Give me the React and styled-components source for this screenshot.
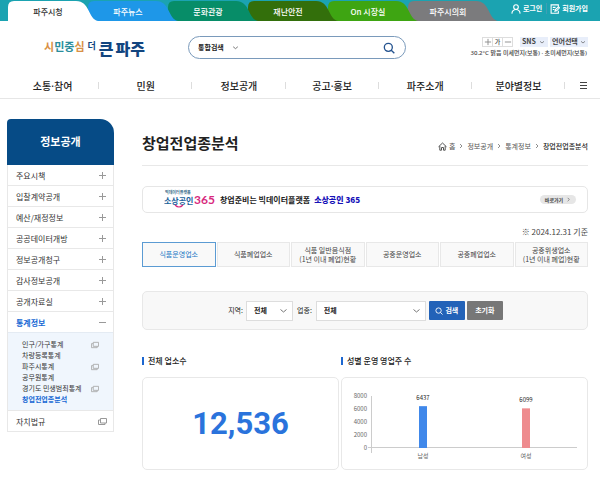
import React, { useState } from 'react';
import styled, { createGlobalStyle } from 'styled-components';

const GlobalStyle = createGlobalStyle`
  * {
    box-sizing: border-box;
  }

  body {
    margin: 0;
    background: #fff;
    color: #222;
    font-family: 'Noto Sans CJK KR', 'Noto Sans', sans-serif;
    font-size: 7px;
    line-height: 11px;
  }

  a {
    color: inherit;
    text-decoration: none;
  }

  ul,
  h1,
  h2,
  p {
    margin: 0;
    padding: 0;
    list-style: none;
  }

  button,
  input,
  select {
    margin: 0;
    padding: 0;
    border: 0;
    background: none;
    color: inherit;
    font: inherit;
  }

  svg {
    display: block;
    flex: none;
  }
`;

const TopBar = styled.div`
  display: flex;
  justify-content: space-between;
  height: 21px;
  padding: 1px 12px 0 8px;
  background: #1ba3b1;
`;

const SiteTabs = styled.nav`
  display: flex;
  isolation: isolate;
`;

const SiteTab = styled.a`
  position: relative;
  z-index: ${(props) => props.$order};
  width: 90px;
  margin-right: -10px;
  padding-right: 10px;
  background: ${(props) => props.$bg};
  color: ${(props) => props.$color || '#fff'};
  clip-path: path('M0 20V6Q0 0 6 0H68C82 0 80 18 90 20Z');
  font-size: 8px;
  font-weight: 500;
  line-height: 21px;
  text-align: center;
`;

const Account = styled.div`
  display: flex;
  align-items: center;
  height: 15px;
  color: #fff;
  font-weight: 700;

  a {
    display: flex;
    align-items: center;
    gap: 2px;
  }

  a + a {
    margin-left: 4px;
    padding-left: 3px;
    border-left: 1px solid #3e9fb5;
  }
`;

const Header = styled.header`
  display: flex;
  align-items: center;
  height: 53px;
  padding: 0 12px 0 44px;
`;

const Logo = styled.a`
  display: flex;
  align-items: center;
  width: 144px;
  color: #12457f;
  font-weight: 900;
  white-space: nowrap;
`;

const LogoSmall = styled.span`
  margin-right: 3px;
  padding-bottom: 4px;
  color: ${(props) => props.$color || '#2a8d9c'};
  font-size: ${(props) => props.$size || 11}px;
  font-weight: 700;
  line-height: 14px;

  em {
    color: #d99045;
    font-style: normal;
  }
`;

const LogoBig = styled.span`
  display: flex;
  gap: 2px;
  font-size: 16px;
  line-height: 24px;
`;

const SearchBox = styled.form`
  display: flex;
  align-items: center;
  flex: 0 1 218px;
  height: 23px;
  padding: 0 10px 0 9px;
  border: 1px solid #7a9abb;
  border-radius: 12px;

  input {
    flex: 1;
    min-width: 0;
    outline: 0;
  }

  button {
    color: #24538f;
  }
`;

const SelectWrap = styled.span`
  display: flex;
  align-items: center;
  width: ${(props) => props.$width}px;
  height: ${(props) => props.$height || 10}px;
  padding: ${(props) => props.$padding || '0'};
  border: ${(props) => (props.$boxed ? '1px solid #ddd' : '0')};
  background: ${(props) => props.$bg || 'transparent'};
  font-weight: ${(props) => props.$weight || 700};

  select {
    flex: 1;
    min-width: 0;
    appearance: none;
    outline: 0;
  }

  svg {
    color: ${(props) => (props.$boxed ? '#777' : '#555')};
  }
`;

const Tools = styled.div`
  display: flex;
  flex-direction: column;
  align-items: flex-end;
  gap: 1px;
  margin-left: auto;
  color: #444;
`;

const ToolRow = styled.div`
  display: flex;
  gap: 2px;
`;

const FontSize = styled.div`
  display: flex;
  margin-right: 5px;
  border: 1px solid #ddd;

  button {
    display: grid;
    place-items: center;
    width: 9px;
    height: 8px;
    font-size: 6px;
    font-weight: 500;
    line-height: 8px;
  }

  button + button {
    width: 10px;
    border-left: 1px solid #ddd;
  }

  svg {
    color: #888;
  }
`;

const Weather = styled.p`
  padding-right: 1px;
  font-family: 'Noto Sans', 'Noto Sans CJK KR', sans-serif;
  font-size: 6px;
  font-weight: 500;
  white-space: nowrap;
`;

const MainNav = styled.nav`
  display: flex;
  align-items: center;
  height: 25px;
  padding: 0 0 1px 6px;
  border-bottom: 1px solid #e6e6e6;

  a {
    flex: 1;
    background: linear-gradient(#ddd, #ddd) right center / 1px 7px no-repeat;
    font-family: 'Noto Sans', 'Noto Sans CJK KR', sans-serif;
    font-size: 10px;
    font-weight: 500;
    line-height: 22px;
    text-align: center;
  }

  button {
    display: grid;
    place-items: center;
    width: 35px;
    height: 22px;
    padding-left: 2px;
    color: #444;
  }
`;

const Page = styled.div`
  display: flex;
  align-items: flex-start;
  gap: 28px;
  padding: 20px 12px 9px 7px;
`;

const Side = styled.aside`
  flex: 0 0 107px;
`;

const SideTitle = styled.h2`
  height: 46px;
  border-radius: 4px 14px 0 0;
  background: #064b86;
  color: #fff;
  font-size: 11px;
  font-weight: 700;
  line-height: 45px;
  text-align: center;
`;

const SideList = styled.ul`
  border: 1px solid #e8e8e8;
  border-top: 0;
`;

const SideItem = styled.li`
  & + & {
    border-top: 1px solid #e8e8e8;
  }
`;

const SideLink = styled.a`
  display: flex;
  align-items: center;
  justify-content: space-between;
  height: 20px;
  padding: 1px 6px 0 8px;
  color: ${(props) => (props.$active ? '#1668d4' : '#333')};
  font-size: 8px;
  font-weight: ${(props) => (props.$active ? 700 : 400)};

  svg {
    color: #999;
  }
`;

const SubList = styled.ul`
  padding: 6px 14px 5px;
  border-top: 1px solid #e4ebf3;
  background: #f0f6fd;
`;

const SubLink = styled.a`
  display: flex;
  align-items: center;
  justify-content: space-between;
  color: ${(props) => (props.$active ? '#1668d4' : '#333')};
  font-weight: ${(props) => (props.$active ? 700 : 400)};
  white-space: nowrap;

  svg {
    color: #aaa;
  }
`;

const Main = styled.main`
  flex: 1;
  min-width: 0;
`;

const TitleRow = styled.div`
  display: flex;
  align-items: center;
  justify-content: space-between;
  height: 47px;
  border-bottom: 1px solid #e8e8e8;

  h1 {
    font-size: 15px;
    font-weight: 700;
    line-height: 47px;
  }
`;

const Crumbs = styled.nav`
  display: flex;
  align-items: center;
  gap: 3px;
  padding-top: 8px;
  color: #555;

  a:first-child {
    display: flex;
    align-items: center;
    gap: 2px;
  }

  strong {
    color: #222;
    font-weight: 500;
  }
`;

const Banner = styled.a`
  display: flex;
  align-items: center;
  height: 27px;
  margin-top: 20px;
  padding: 0 11px 0 21px;
  border: 1px solid #e6e6e6;
  border-radius: 5px;
  font-size: 8px;
  font-weight: 700;

  strong {
    margin-left: 4px;
    color: #1712b8;
  }
`;

const BannerText = styled.span`
  margin-left: 4px;
`;

const BannerMore = styled.span`
  display: flex;
  align-items: center;
  justify-content: center;
  gap: 3px;
  width: 36px;
  height: 9px;
  margin-left: auto;
  border-radius: 5px;
  background: #e6e6e6;
  color: #444;
  font-size: 5px;
  line-height: 9px;
`;

const BaseDate = styled.p`
  margin-top: 13px;
  color: #444;
  font-size: 8px;
  line-height: 12px;
  text-align: right;
`;

const TabGrid = styled.div`
  display: grid;
  grid-template-columns: repeat(6, 1fr);
  gap: 1px;
  margin-top: 4px;
`;

const TabButton = styled.button`
  height: 25px;
  border: 1px solid ${(props) => (props.$active ? '#5b9bd3' : '#e8e8e8')};
  background: #f9f9f9;
  color: ${(props) => (props.$active ? '#2277c4' : '#444')};
  line-height: 9px;
  white-space: pre-line;
`;

const Filter = styled.form`
  display: flex;
  align-items: center;
  justify-content: center;
  gap: 3px;
  height: 39px;
  margin-top: 24px;
  padding-left: 1px;
  border: 1px solid #e8e8e8;
  border-radius: 5px;
  background: #f8f8f8;

  label + span + label {
    margin: 0 1px;
  }
`;

const FilterButton = styled.button`
  display: flex;
  align-items: center;
  justify-content: center;
  gap: 2px;
  width: 36px;
  height: 19px;
  margin-right: ${(props) => (props.$primary ? '-1px' : '0')};
  border-radius: 1px;
  background: ${(props) => (props.$primary ? '#2262b8' : '#777')};
  color: #fff;
  font-weight: 700;
`;

const Panels = styled.div`
  display: grid;
  grid-template-columns: 197fr 247fr;
  gap: 2px;
  margin-top: 25px;
`;

const PanelTitle = styled.h2`
  display: flex;
  align-items: center;
  gap: 4px;
  font-size: 8px;
  font-weight: 500;
  line-height: 12px;

  &::before {
    content: '';
    width: 2px;
    height: 8px;
    background: #1d67d0;
  }
`;

const Card = styled.div`
  display: grid;
  place-items: center;
  height: 93px;
  margin-top: 10px;
  border: 1px solid #e8e8e8;
  border-radius: 5px;
`;

const Total = styled.strong`
  color: #2a73dc;
  font-family: Roboto, sans-serif;
  font-size: 31px;
  font-weight: 700;
  line-height: 36px;
`;

const Chart = styled.svg`
  width: 100%;
  height: 91px;
  font-size: 6px;
`;

const siteTabs = [
  { name: '파주시청', bg: '#fff', color: '#333' },
  { name: '파주뉴스', bg: '#1e97e8' },
  { name: '문화관광', bg: '#078d68' },
  { name: '재난안전', bg: '#336f0b' },
  { name: 'On 시장실', bg: '#3ea512' },
  { name: '파주시의회', bg: '#7b7b7d' },
];

const mainMenu = ['소통·참여', '민원', '정보공개', '공고·홍보', '파주소개', '분야별정보'];

const sideMenu = [
  { name: '주요시책', icon: 'plus' },
  { name: '입찰계약공개', icon: 'plus' },
  { name: '예산/재정정보', icon: 'plus' },
  { name: '공공데이터개방', icon: 'plus' },
  { name: '정보공개청구', icon: 'plus' },
  { name: '감사정보공개', icon: 'plus' },
  { name: '공개자료실', icon: 'plus' },
  {
    name: '통계정보',
    icon: 'minus',
    children: [
      { name: '인구/가구통계', external: true },
      { name: '차량등록통계' },
      { name: '파주시통계', external: true },
      { name: '공무원통계' },
      { name: '경기도 민생범죄통계', external: true },
      { name: '창업전업종분석', active: true },
    ],
  },
  { name: '자치법규', icon: 'window' },
];

const tabs = [
  '식품운영업소',
  '식품폐업업소',
  '식품 일반음식점\n(1년 이내 폐업)현황',
  '공중운영업소',
  '공중폐업업소',
  '공중위생업소\n(1년 이내 폐업)현황',
];

const owners = [
  { label: '남성', value: 6437, x: 81, color: '#4088ea' },
  { label: '여성', value: 6099, x: 184, color: '#ee8b8e' },
];

const icons = {
  plus: <path d='M4.5 1v7M1 4.5h7' />,
  minus: <path d='M1 4.5h7' />,
  window: <path d='M2.500 1.500h6v4.500h-6zM2.500 3H.5v4.500H7V6' />,
  down: <path d='M1.500 3.500l3 2.500l3-2.500' />,
  right: <path d='M3 1.500l3 3L3 7.500' />,
  search: <path d='M4 1a3 3 0 1 0 0 6a3 3 0 0 0 0-6M6.2 6.2l2.3 2.3' />,
  user: <path d='M4.5.7a2 2 0 0 0 0 4.2a2 2 0 0 0 0-4.2M.8 8.7C1 6.3 2.3 5 4.5 5s3.500 1.300 3.700 3.700' />,
  join: <path d='M7.500 2.500V.8H1v7.500h6.500V6M2.500 3h2.500M2.500 5h1.500M4.500 6.500l.4-1.500L7.700 2.500l.9.900-2.700 2.700z' />,
  home: <path d='M.5 4.800L4.500 1l4 3.800M1.800 4v4.200h1.700V5.500h2v2.700h1.700V4' />,
  menu: <path d='M1 1.500h7M1 4.500h7M1 7.500h7' />,
};

const Icon = ({ name, size = 9, stroke = 1 }) => (
  <svg
    width={size}
    height={size}
    viewBox='0 0 9 9'
    fill='none'
    stroke='currentColor'
    strokeWidth={stroke}
    aria-hidden='true'
  >
    {icons[name]}
  </svg>
);

const SobizLogo = () => (
  <svg width='52' height='21' viewBox='0 0 52 21' role='img' aria-label='소상공인 365'>
    <text x='1' y='5' fontSize='4' fill='#3a6d8c'>
      빅데이터플랫폼
    </text>
    <text x='0' y='15' fontSize='8' fontWeight='700' fill='#17609a'>
      소상공인
    </text>
    <text x='30' y='15' fontSize='12' fontWeight='700' fontFamily='Lato' fill='#d8297e'>
      365
    </text>
    <path d='M11 16q4 4 8 0' fill='none' stroke='#d8297e' strokeWidth='1.200' />
  </svg>
);

const OwnerChart = () => {
  const base = 70;
  const scale = 52 / 8000;

  return (
    <Chart viewBox='0 0 245 91' role='img' aria-label='성별 운영 영업주 수'>
      {[8000, 6000, 4000, 2000, 0].map((tick) => (
        <text key={tick} x='25' y={base + 2 - tick * scale} textAnchor='end' fill='#666'>
          {tick}
        </text>
      ))}
      <path d='M29.500 18v57M26 69.500h209' stroke='#ccc' fill='none' />
      {owners.map(({ label, value, x, color }) => (
        <g key={label} textAnchor='middle'>
          <rect x={x - 4} y={base - value * scale} width='8' height={value * scale} fill={color} />
          <text x={x} y={base - value * scale - 6} fill='#222'>
            {value}
          </text>
          <text x={x} y='80' fill='#666'>
            {label}
          </text>
        </g>
      ))}
    </Chart>
  );
};

const App = () => {
  const [activeTab, setActiveTab] = useState(0);

  const handleSubmit = (e) => {
    e.preventDefault();
  };

  return (
    <>
      <GlobalStyle />
      <TopBar>
        <SiteTabs>
          {siteTabs.map(({ name, bg, color }, i) => (
            <SiteTab key={name} href='#' $bg={bg} $color={color} $order={siteTabs.length - i}>
              {name}
            </SiteTab>
          ))}
        </SiteTabs>
        <Account>
          <a href='#'>
            <Icon name='user' size={10} />
            로그인
          </a>
          <a href='#'>
            <Icon name='join' size={10} />
            회원가입
          </a>
        </Account>
      </TopBar>

      <Header>
        <Logo href='#'>
          <LogoSmall>
            <em>시</em>민중<em>심</em>
          </LogoSmall>
          <LogoSmall $color='#12457f' $size={9}>
            더
          </LogoSmall>
          <LogoBig>
            <span>큰</span> <span>파주</span>
          </LogoBig>
        </Logo>
        <SearchBox onSubmit={handleSubmit}>
          <SelectWrap $width={41}>
            <select aria-label='검색 범위'>
              <option>통합검색</option>
            </select>
            <Icon name='down' size={7} />
          </SelectWrap>
          <input type='text' aria-label='검색어' />
          <button type='submit' aria-label='검색'>
            <Icon name='search' size={12} />
          </button>
        </SearchBox>
        <Tools>
          <ToolRow>
            <FontSize>
              <button type='button' aria-label='글자 크게'>
                <Icon name='plus' size={8} />
              </button>
              <button type='button'>가</button>
              <button type='button' aria-label='글자 작게'>
                <Icon name='minus' size={8} />
              </button>
            </FontSize>
            <SelectWrap $width={28} $bg='#e8eefa' $padding='0 3px 0 2px'>
              <select aria-label='SNS'>
                <option>SNS</option>
              </select>
              <Icon name='down' size={6} />
            </SelectWrap>
            <SelectWrap $width={38} $bg='#e8eefa' $padding='0 2px'>
              <select aria-label='언어'>
                <option>언어선택</option>
              </select>
              <Icon name='down' size={6} />
            </SelectWrap>
          </ToolRow>
          <Weather>30.2°C 맑음 미세먼지(보통) · 초미세먼지(보통)</Weather>
        </Tools>
      </Header>

      <MainNav>
        {mainMenu.map((name) => (
          <a key={name} href='#'>
            {name}
          </a>
        ))}
        <button type='button' aria-label='전체메뉴'>
          <Icon name='menu' />
        </button>
      </MainNav>

      <Page>
        <Side>
          <SideTitle>정보공개</SideTitle>
          <SideList>
            {sideMenu.map(({ name, icon, children }) => (
              <SideItem key={name}>
                <SideLink href='#' $active={!!children}>
                  {name}
                  <Icon name={icon} />
                </SideLink>
                {children && (
                  <SubList>
                    {children.map((sub) => (
                      <li key={sub.name}>
                        <SubLink href='#' $active={sub.active}>
                          {sub.name}
                          {sub.external && <Icon name='window' size={8} />}
                        </SubLink>
                      </li>
                    ))}
                  </SubList>
                )}
              </SideItem>
            ))}
          </SideList>
        </Side>

        <Main>
          <TitleRow>
            <h1>창업전업종분석</h1>
            <Crumbs>
              <a href='#'>
                <Icon name='home' />홈
              </a>
              <Icon name='right' size={6} />
              <a href='#'>정보공개</a>
              <Icon name='right' size={6} />
              <a href='#'>통계정보</a>
              <Icon name='right' size={6} />
              <strong>창업전업종분석</strong>
            </Crumbs>
          </TitleRow>

          <Banner href='#'>
            <SobizLogo />
            <BannerText>
              창업준비는 빅데이터플랫폼<strong>소상공인 365</strong>
            </BannerText>
            <BannerMore>
              바로가기
              <Icon name='right' size={5} />
            </BannerMore>
          </Banner>

          <BaseDate>※ 2024.12.31 기준</BaseDate>

          <TabGrid>
            {tabs.map((name, i) => (
              <TabButton
                key={name}
                type='button'
                $active={i === activeTab}
                onClick={() => setActiveTab(i)}
              >
                {name}
              </TabButton>
            ))}
          </TabGrid>

          <Filter onSubmit={handleSubmit}>
            <label htmlFor='region'>지역:</label>
            <SelectWrap $width={47} $height={20} $padding='0 4px 0 7px' $bg='#fff' $boxed>
              <select id='region'>
                <option>전체</option>
              </select>
              <Icon name='down' />
            </SelectWrap>
            <label htmlFor='business'>업종:</label>
            <SelectWrap $width={110} $height={20} $padding='0 4px 0 7px' $bg='#fff' $boxed>
              <select id='business'>
                <option>전체</option>
              </select>
              <Icon name='down' />
            </SelectWrap>
            <FilterButton type='submit' $primary>
              <Icon name='search' size={8} />
              검색
            </FilterButton>
            <FilterButton type='reset'>초기화</FilterButton>
          </Filter>

          <Panels>
            <section>
              <PanelTitle>전체 업소수</PanelTitle>
              <Card>
                <Total>12,536</Total>
              </Card>
            </section>
            <section>
              <PanelTitle>성별 운영 영업주 수</PanelTitle>
              <Card>
                <OwnerChart />
              </Card>
            </section>
          </Panels>
        </Main>
      </Page>
    </>
  );
};

export default App;
